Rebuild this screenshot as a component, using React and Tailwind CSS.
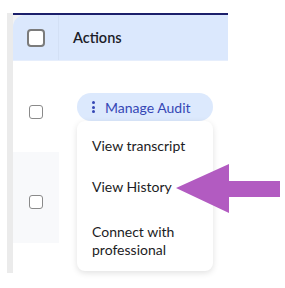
import React from "react";

function Check({ big }) {
  return big ? (
    <div className="w-[18px] h-[18px] rounded-[4px] border-2 border-[#7b7b7b] bg-white" />
  ) : (
    <div className="w-[14px] h-[14px] rounded-[3px] border-[1.5px] border-[#8a8a8a] bg-white" />
  );
}

export default function App() {
  const font = { fontFamily: "Lato, 'Noto Sans', sans-serif" };
  return (
    <div className="w-[285px] h-[288px] bg-white pt-[13px] pl-[7px] relative" style={font}>
      <div className="flex">
        <div className="w-[6px] h-[260px] bg-[#ebebeb]" />
        <div className="w-[215px] flex flex-col">
          <div className="h-[2px] bg-[#1b1f6b]" />
          <div className="bg-[#f1f2f4]">
            <div className="h-[46px] flex rounded-tl-[12px] bg-[#dbe8fd] border-b border-[#e6eefc]">
              <div className="w-[46px] flex items-center pl-[14px] border-r border-[#d3e0f5]">
                <Check big />
              </div>
              <div className="flex items-center pl-[14px] text-[14.5px] font-semibold text-[#1c1c28]">
                Actions
              </div>
            </div>
          </div>
          <div className="h-[91px] flex">
            <div className="w-[46px] pl-[16px] pt-[44px]">
              <Check />
            </div>
            <div className="pl-[18px] pt-[32px]">
              <div className="w-[136px] h-[28px] rounded-full bg-[#dce9fd] flex items-center pl-[15px] gap-[10px] text-[14px] text-[#3547b5]">
                <div className="flex flex-col gap-[1.5px]">
                  <div className="w-[3px] h-[3px] rounded-full bg-[#3547b5]" />
                  <div className="w-[3px] h-[3px] rounded-full bg-[#3547b5]" />
                  <div className="w-[3px] h-[3px] rounded-full bg-[#3547b5]" />
                </div>
                <span>Manage Audit</span>
              </div>
            </div>
          </div>
          <div className="h-[91px] flex">
            <div className="w-[46px] pl-[16px] pt-[43px] bg-[#f8f9fb]">
              <Check />
            </div>
          </div>
        </div>
      </div>

      <div className="absolute left-[77px] top-[121px] w-[136px] h-[150px] bg-white rounded-[8px] shadow-[0_2px_6px_rgba(0,0,0,0.12)] pl-[15px] pt-[16px] text-[14px] leading-[18px] text-[#1c1c24]">
        <div>View transcript</div>
        <div className="mt-[23px]">View History</div>
        <div className="mt-[27px]">
          Connect with
          <br />
          professional
        </div>
      </div>

      <svg className="absolute left-[176px] top-[164px]" width="105" height="50" viewBox="0 0 105 50">
        <polygon points="0,24 53,0 53,17 104,17 104,33 53,33 53,49" fill="#b25bc1" />
      </svg>
    </div>
  );
}
